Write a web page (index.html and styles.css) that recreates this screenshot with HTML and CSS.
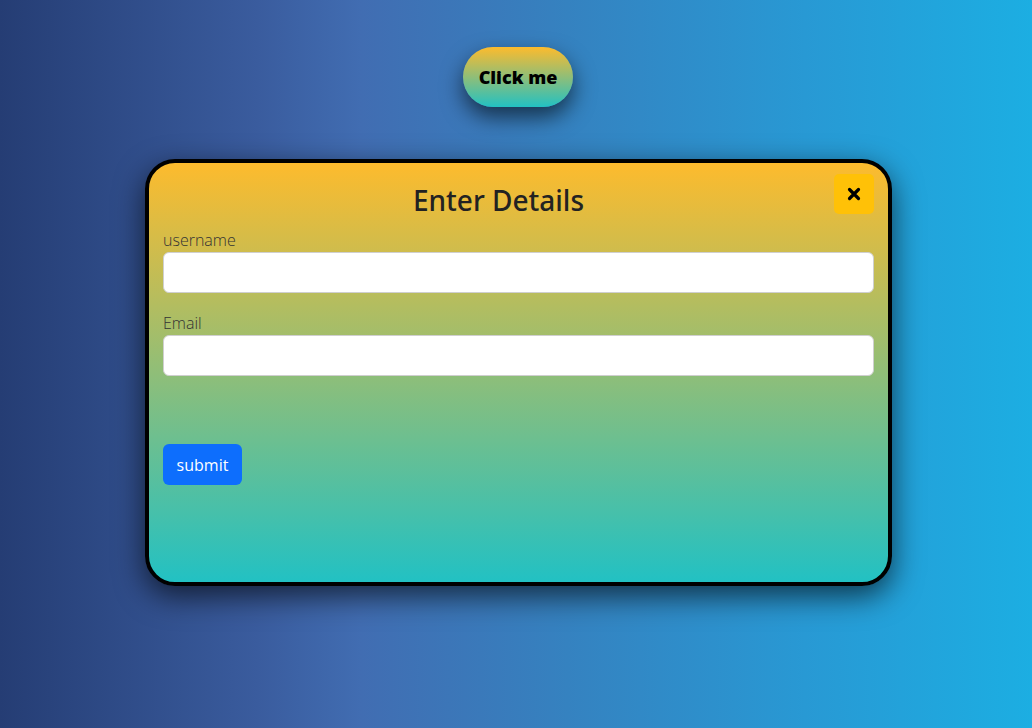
FILE: index.html
```html
<!DOCTYPE html>
<html>
<head>
<meta charset="utf-8">
<link rel="stylesheet" href="styles.css">
</head>
<body>
<div class="page">
  <button class="open-btn">Click me</button>
  <div class="modal">
    <div class="modal-header">
      <h2 class="modal-title">Enter Details</h2>
      <button class="close-btn" aria-label="close">
        <svg width="14" height="14" viewBox="0 0 14 14"><path d="M2.5 2.5 L11.5 11.5 M11.5 2.5 L2.5 11.5" stroke="#000" stroke-width="3.2" stroke-linecap="round"/></svg>
      </button>
    </div>
    <form class="form">
      <label class="label">username</label>
      <input class="input" type="text">
      <label class="label label-email">Email</label>
      <input class="input" type="email">
      <button type="button" class="submit-btn">submit</button>
    </form>
  </div>
</div>
</body>
</html>
```

FILE: styles.css
```css
* { box-sizing: border-box; }
html, body { margin: 0; height: 100%; }
body {
  font-family: "Open Sans", "Noto Sans", sans-serif;
  background: linear-gradient(to right, #253d74 0%, #3a5c9e 25%, #416db2 35%, #3582c0 55%, #2899d4 78%, #1caee2 100%);
  overflow: hidden;
}
.page {
  display: flex;
  flex-direction: column;
  align-items: center;
  padding-top: 47px;
}
.open-btn {
  margin-left: 4px;
  width: 110px;
  height: 60px;
  border: none;
  border-radius: 30px;
  background: linear-gradient(to bottom, #fdbb2d, #22c1c3);
  font-family: "Open Sans", sans-serif;
  font-weight: 800;
  font-size: 18px;
  color: #000;
  box-shadow: 0 10px 22px rgba(0, 0, 0, 0.6);
  cursor: pointer;
}
.modal {
  margin-top: 52px;
  margin-left: 5px;
  width: 747px;
  height: 427px;
  border: 4px solid #000;
  border-radius: 30px;
  background: linear-gradient(to bottom, #fdbb2d, #22c1c3);
  box-shadow: 0 10px 30px rgba(0, 0, 0, 0.65);
  padding: 11px 14px;
}
.modal-header {
  display: flex;
  align-items: flex-start;
}
.modal-title {
  flex: 1;
  text-align: center;
  margin: 9px 0 0;
  font-family: "Noto Sans", "Open Sans", sans-serif;
  font-size: 28px;
  font-weight: 500;
  line-height: 34px;
  color: #222;
}
.close-btn {
  width: 40px;
  height: 40px;
  border: none;
  border-radius: 5px;
  background: #ffc107;
  display: flex;
  align-items: center;
  justify-content: center;
  padding: 0;
}
.form {
  display: flex;
  flex-direction: column;
  align-items: flex-start;
  margin-top: 11px;
}
.label {
  font-size: 16px;
  line-height: 24px;
  color: #333;
  font-weight: 300;
}
.label-email { margin-top: 18px; }
.input {
  width: 100%;
  height: 41px;
  border: 1px solid #cfcfcf;
  border-radius: 6px;
  background: #fff;
  margin-top: 0;
}
.submit-btn {
  margin-top: 68px;
  width: 79px;
  height: 41px;
  border: none;
  border-radius: 6px;
  background: #0d6efd;
  color: #fff;
  font-family: "Open Sans", sans-serif;
  font-size: 16px;
}
```
